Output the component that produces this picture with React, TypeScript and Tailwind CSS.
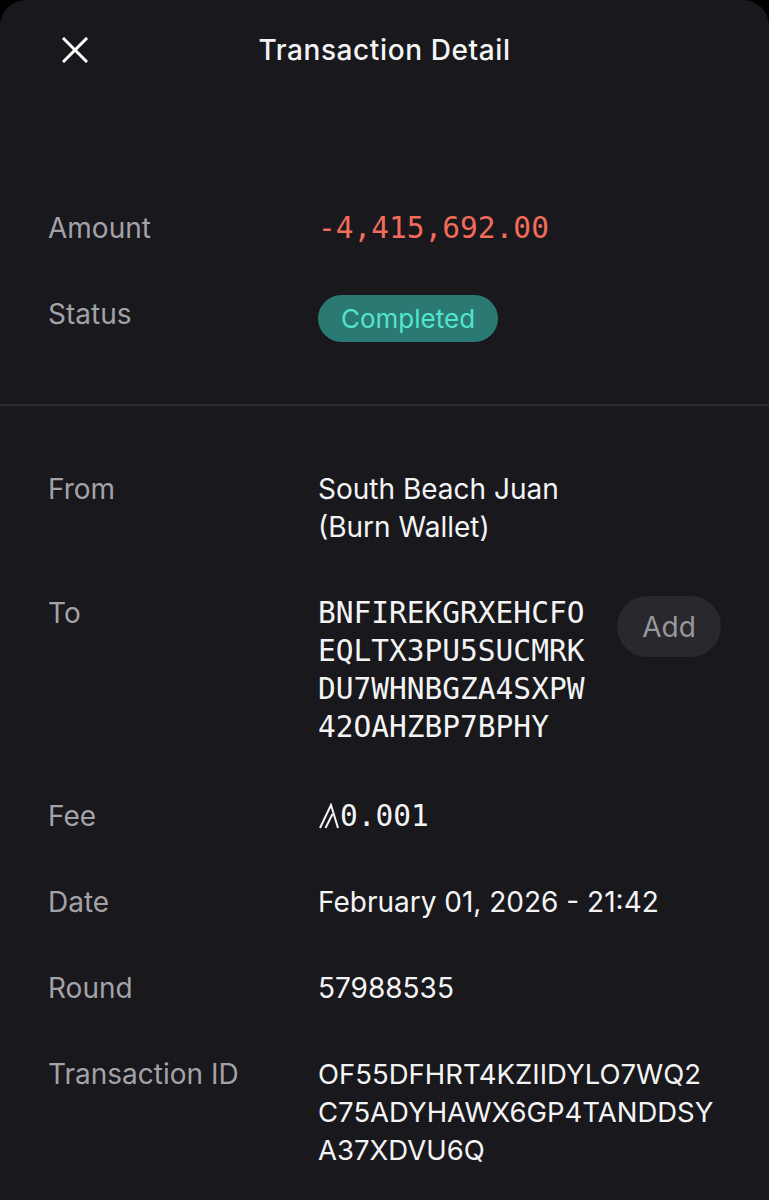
import React from 'react';

const sans = { fontFamily: 'Inter, "Noto Sans", sans-serif' };
const mono = { fontFamily: '"DejaVu Sans Mono", monospace' };

function Row({ label, children, extra }: { label: string; children: React.ReactNode; extra?: React.ReactNode }) {
  return (
    <div className="flex items-start">
      <div className="w-[270px] shrink-0 text-[28px] leading-[38px] text-[#a3a2a8]">{label}</div>
      <div className="flex-1 min-w-0">{children}</div>
      {extra}
    </div>
  );
}

function AlgoMark() {
  return (
    <svg width="20" height="26" viewBox="0 0 20 26" fill="none" stroke="currentColor" strokeWidth="2" className="mr-[1px]">
      <path d="M1 25 L12 2 L19 25" />
      <path d="M6.5 25 L13.5 11" />
    </svg>
  );
}

export default function App() {
  return (
    <div className="min-h-[1200px] w-full bg-black" style={sans}>
      <div className="min-h-[1200px] bg-[#19181d] rounded-t-[26px] text-[#f4f4f5] overflow-hidden">
        {/* Header */}
        <div className="relative h-[100px] flex items-center justify-center">
          <button className="absolute left-[62px] top-[37px] text-white">
            <svg width="26" height="26" viewBox="0 0 26 26" stroke="currentColor" strokeWidth="3" strokeLinecap="square">
              <path d="M2 2 L24 24 M24 2 L2 24" />
            </svg>
          </button>
          <h1 className="text-[28px] font-medium tracking-[0.6px]">Transaction Detail</h1>
        </div>

        {/* Summary */}
        <div className="px-12 pt-[109px] pb-[62px] flex flex-col gap-12">
          <Row label="Amount">
            <span className="text-[29.5px] leading-[38px] text-[#f26b5b]" style={mono}>
              -4,415,692.00
            </span>
          </Row>
          <Row label="Status">
            <span className="inline-flex items-center h-[47px] px-[23px] rounded-full bg-[#2a7973] text-[#55e3cf] text-[26px]">
              Completed
            </span>
          </Row>
        </div>

        <div className="h-[2px] bg-[#2c2b31]" />

        {/* Details */}
        <div className="px-12 pt-[64px] pb-10 flex flex-col gap-12">
          <Row label="From">
            <div className="text-[28px] leading-[38px]">
              South Beach Juan
              <br />
              (Burn Wallet)
            </div>
          </Row>
          <Row
            label="To"
            extra={
              <button className="mt-[2px] h-[61px] w-[104px] rounded-full bg-[#29282d] text-[#98979c] text-[28px]">
                Add
              </button>
            }
          >
            <div className="text-[29.5px] leading-[38px] mb-[3px]" style={mono}>
              <div>BNFIREKGRXEHCFO</div>
              <div>EQLTX3PU5SUCMRK</div>
              <div>DU7WHNBGZA4SXPW</div>
              <div>42OAHZBP7BPHY</div>
            </div>
          </Row>
          <Row label="Fee">
            <div className="flex items-center text-[29.5px] leading-[38px] pl-[1px]" style={mono}>
              <AlgoMark />
              <span>0.001</span>
            </div>
          </Row>
          <Row label="Date">
            <div className="text-[28px] leading-[38px]">February 01, 2026 - 21:42</div>
          </Row>
          <Row label="Round">
            <div className="text-[28px] leading-[38px]">57988535</div>
          </Row>
          <Row label="Transaction ID">
            <div className="text-[27.5px] leading-[38px]">
              <div>OF55DFHRT4KZIIDYLO7WQ2</div>
              <div>C75ADYHAWX6GP4TANDDSY</div>
              <div>A37XDVU6Q</div>
            </div>
          </Row>
        </div>
      </div>
    </div>
  );
}
